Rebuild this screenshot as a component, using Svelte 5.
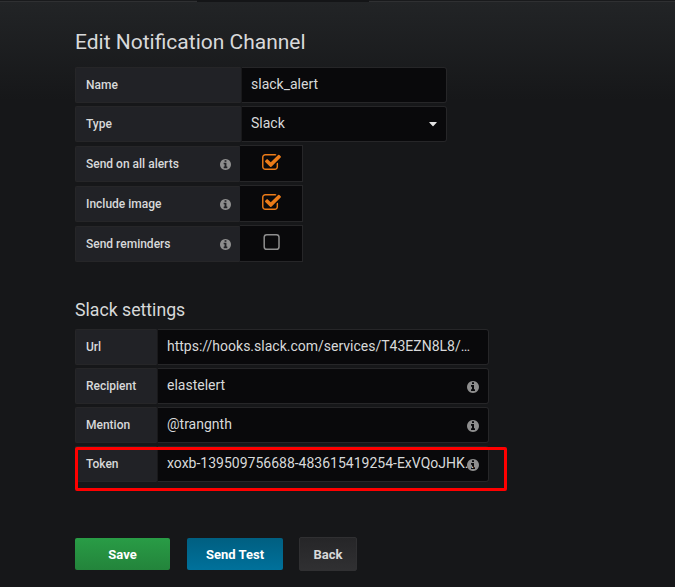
<script>
  const switches = [
    { label: 'Send on all alerts', on: true },
    { label: 'Include image', on: true },
    { label: 'Send reminders', on: false }
  ];
  const settings = [
    { label: 'Url', value: 'https://hooks.slack.com/services/T43EZN8L8/…', info: false },
    { label: 'Recipient', value: 'elastelert', info: true },
    { label: 'Mention', value: '@trangnth', info: true },
    { label: 'Token', value: 'xoxb-139509756688-483615419254-ExVQoJHK…', info: true, marked: true }
  ];
</script>

{#snippet infoIcon(size)}
  <svg width={size} height={size} viewBox="128 128 1536 1536" fill="#8e8e8e"><path d="M1152 1376v-160q0-14-9-23t-23-9h-96v-512q0-14-9-23t-23-9h-320q-14 0-23 9t-9 23v160q0 14 9 23t23 9h96v320h-96q-14 0-23 9t-9 23v160q0 14 9 23t23 9h448q14 0 23-9t9-23zm-128-896v-160q0-14-9-23t-23-9h-192q-14 0-23 9t-9 23v160q0 14 9 23t23 9h192q14 0 23-9t9-23zm640 416q0 209-103 385.5t-279.5 279.5-385.5 103-385.5-103-279.5-279.5-103-385.5 103-385.5 279.5-279.5 385.5-103 385.5 103 279.5 279.5 103 385.5z" /></svg>
{/snippet}

<div class="page">
  <div class="tabs"><span></span><i></i><span></span></div>
  <main>
    <h1>Edit Notification Channel</h1>
    <div class="row">
      <div class="label wide">Name</div>
      <div class="field short">slack_alert</div>
    </div>
    <div class="row">
      <div class="label wide">Type</div>
      <div class="field short select">Slack
        <svg width="8" height="5" viewBox="0 0 8 5" fill="#e3e3e3"><path d="M.5 0h7q.5.3 0 .8L4.4 4.1q-.4.4-.8 0L.5.8Q0 .3.5 0z" /></svg>
      </div>
    </div>
    <div class="switches">
      {#each switches as s}
        <div class="row switch">
          <div class="label tip">{s.label}{@render infoIcon(11)}</div>
          <div class="check">
            {#if s.on}
              <svg width="19" height="16" viewBox="64 128 1664 1408" fill="#eb7b18"><path d="M1472 930v318q0 119-84.500 203.500t-203.500 84.500h-832q-119 0-203.500-84.500t-84.500-203.500v-832q0-119 84.500-203.500t203.500-84.500h832q63 0 117 25 15 7 18 23 3 17-9 29l-49 49q-10 10-23 10-3 0-9-2-23-6-45-6h-832q-66 0-113 47t-47 113v832q0 66 47 113t113 47h832q66 0 113-47t47-113v-254q0-13 9-22l64-64q10-10 23-10 6 0 12 3 20 8 20 29zm231-489l-814 814q-24 24-57 24t-57-24l-430-430q-24-24-24-57t24-57l110-110q24-24 57-24t57 24l263 263 647-647q24-24 57-24t57 24l110 110q24 24 24 57t-24 57z" /></svg>
            {:else}
              <svg class="off" width="17" height="16" viewBox="0 0 17 16" fill="none" stroke="#8e8e8e" stroke-width="1.5"><rect x="1.200" y=".75" width="14.800" height="14.500" rx="2.600" /></svg>
            {/if}
          </div>
        </div>
      {/each}
    </div>

    <h2>Slack settings</h2>
    {#each settings as s}
      <div class="row">
        <div class="label narrow">{s.label}</div>
        <div class="field long">{s.value}
          {#if s.info}<span class="hint">{@render infoIcon(12)}</span>{/if}
        </div>
        {#if s.marked}<div class="marker"></div>{/if}
      </div>
    {/each}

    <div class="actions">
      <button class="save">Save</button>
      <button class="test">Send Test</button>
      <button class="back">Back</button>
    </div>
  </main>
</div>

<style>
  :global(body) { background: #161719; }
  * { box-sizing: border-box; }
  .page {
    width: 675px;
    height: 587px;
    overflow: hidden;
    font-family: Roboto, "Liberation Sans", sans-serif;
    color: #d8d9da;
    background: linear-gradient(180deg, #222426 2px, #161719 100px);
  }
  .tabs { display: flex; height: 2px; }
  .tabs span { width: 197px; border-bottom: 1px solid #2f3032; background: #191a1c; }
  .tabs span:last-child { flex: 1; }
  .tabs i { width: 172px; background: #141517; }
  main { padding: 27px 0 0 75px; }
  h1, h2 { margin: 0; font-weight: 400; white-space: nowrap; }
  h1 { font-size: 21px; line-height: 26px; height: 38px; }
  h2 { font-size: 17.7px; line-height: 22px; height: 30px; margin-top: 37px; }
  .row { display: flex; position: relative; height: 36px; margin-bottom: 3px; }
  .label {
    display: flex;
    align-items: center;
    justify-content: space-between;
    padding: 0 10px;
    font-size: 12px;
    font-weight: 500;
    background: #212226;
    border: 1px solid #262628;
    border-right-color: #212226;
    border-radius: 2px 0 0 2px;
  }
  .wide { width: 166px; }
  .narrow { width: 82px; }
  .tip { width: 165px; padding-right: 8px; }
  .field {
    position: relative;
    padding: 0 9px;
    font-size: 14px;
    line-height: 32px;
    white-space: nowrap;
    background: #09090b;
    border: 1px solid #262628;
    border-left-color: #19191b;
    border-radius: 0 3px 3px 0;
  }
  .short { width: 206px; }
  .long { width: 332px; }
  .select { display: flex; justify-content: space-between; align-items: flex-start; }
  .select svg { margin-top: 15px; }
  .hint { position: absolute; right: 9.5px; top: 12px; height: 12px; display: flex; }
  .switches { padding-top: 1px; }
  .switch { margin-bottom: 4px; }
  .check {
    display: flex;
    justify-content: center;
    width: 63px;
    height: 37px;
    margin-top: -1px;
    padding-top: 8px;
    background: #09090b;
    border: 1px solid #262628;
    border-left: 0;
  }
  .marker {
    position: absolute;
    left: 0;
    top: 1px;
    width: 432px;
    height: 44px;
    border: 3px solid #f00;
    border-radius: 2px;
  }
  .actions { display: flex; align-items: center; margin-top: 55px; height: 34px; }
  button {
    height: 32px;
    padding: 0;
    border: 0;
    border-radius: 2px;
    color: #fff;
    font: 700 13px Roboto, "Liberation Sans", sans-serif;
  }
  .save { width: 95px; margin-right: 17px; background: linear-gradient(#299c46, #23843b); }
  .test { width: 96px; margin-right: 16px; background: linear-gradient(#005f81, #00719b); }
  .back { width: 58px; height: 34px; color: #d8d9da; background: linear-gradient(#262628, #303032); border: 1px solid #303032; }
</style>
